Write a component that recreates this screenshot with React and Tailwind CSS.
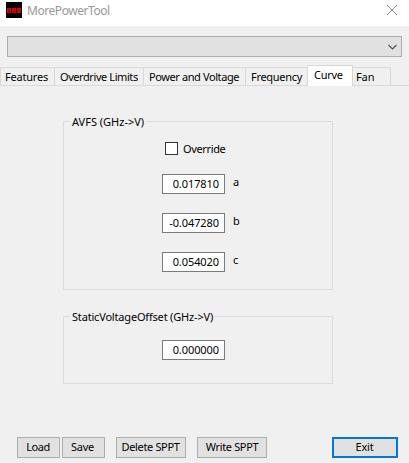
import React from "react";

function Tab({ label, className }) {
  return (
    <div className={`-mr-px -mb-px h-[19px] shrink-0 border border-[#d9d9d9] leading-[17px] whitespace-nowrap ${className}`}>
      {label}
    </div>
  );
}

function Field({ value, label }) {
  return (
    <div className="flex h-5">
      <div className="h-5 w-[63px] shrink-0 border border-[#7a7a7a] bg-white pr-[5px] text-right leading-[17px] tracking-[-0.08px]">
        {value}
      </div>
      {label && <span className="ml-2 h-4 leading-[15px]">{label}</span>}
    </div>
  );
}

function Group({ title, titleClass, className, children }) {
  return (
    <section className={`ml-[63px] w-[270px] border border-[#dcdcdc] ${className}`}>
      <h2 className={`-mt-[9px] ml-[6px] h-[17px] w-fit bg-[#f0f0f0] px-[2px] leading-[17px] whitespace-nowrap ${titleClass}`}>
        {title}
      </h2>
      {children}
    </section>
  );
}

function Button({ label, className }) {
  return (
    <button className={`flex h-[21px] shrink-0 items-center justify-center border bg-[#e1e1e1] whitespace-nowrap ${className}`}>
      {label}
    </button>
  );
}

export default function App() {
  return (
    <div className="flex h-[463px] w-[409px] flex-col overflow-hidden bg-[#f0f0f0] font-['Noto_Sans',sans-serif] text-[11px] text-black">
      <header className="flex h-[26px] shrink-0 bg-white">
        <svg className="mt-[2px] ml-[6px] h-4 w-4" viewBox="0 0 16 16" shapeRendering="crispEdges">
          <rect width="16" height="16" fill="#000" />
          <rect x="1" y="6" width="14" height="5" fill="#e00000" />
          <path d="M5 6h1v5H5zM10 6h1v5h-1z" fill="#300000" />
          <path d="M2 7h2v1H2zM2 9h2v1H2zM7 7h2v1H7zM7 9h2v1H7zM11 8h1v2h-1zM14 8h1v2h-1z" fill="#800000" />
        </svg>
        <span className="ml-[5px] text-[12px] leading-[22px] tracking-[-0.45px] text-[#999]">MorePowerTool</span>
        <svg className="mt-[5px] mr-[12px] ml-auto h-[10px] w-[10px]" viewBox="0 0 10 10" fill="none" stroke="#888" strokeWidth="1">
          <path d="M0 0L10 10M10 0L0 10" />
        </svg>
      </header>

      <div className="mt-[10px] ml-[7px] flex h-[21px] w-[395px] shrink-0 items-center justify-end border border-[#adadad] bg-[#e1e1e1] pr-1">
        <svg className="h-[6px] w-[9px]" viewBox="0 0 9 6" fill="none" stroke="#505050" strokeWidth="1.1">
          <path d="M0.5 1L4.5 5L8.5 1" />
        </svg>
      </div>

      <nav className="mt-2 flex h-[21px] shrink-0 items-end border-b border-[#d9d9d9]">
        <Tab label="Features" className="w-[55px] pl-[4px] tracking-[-0.2px]" />
        <Tab label="Overdrive Limits" className="w-[90px] pl-[5px] tracking-[-0.42px]" />
        <Tab label="Power and Voltage" className="w-[103px] pl-[5px] tracking-[-0.4px]" />
        <Tab label="Frequency" className="w-[63px] pl-[5px] tracking-[-0.3px]" />
        <div className="z-10 -mb-px h-[21px] w-[46px] border border-b-0 border-[#d9d9d9] bg-white pl-[6px] leading-[17px] tracking-[-0.3px]">Curve</div>
        <Tab label="Fan" className="w-[38px] border-l-0 pl-[3px] tracking-[-0.1px]" />
      </nav>

      <Group title="AVFS (GHz->V)" titleClass="" className="mt-[35px] h-[169px] shrink-0">
        <div className="mt-[12px] ml-[101px] flex h-[13px] items-center">
          <span className="h-[13px] w-[13px] border border-[#333] bg-white" />
          <span className="ml-[5px] leading-[15px] tracking-[-0.35px]">Override</span>
        </div>
        <div className="mt-[19px] ml-[98px] flex flex-col gap-[19px]">
          <Field value="0.017810" label="a" />
          <Field value="-0.047280" label="b" />
          <Field value="0.054020" label="c" />
        </div>
      </Group>

      <Group title="StaticVoltageOffset (GHz->V)" titleClass="tracking-[-0.18px]" className="mt-[26px] h-[68px] shrink-0">
        <div className="mt-[15px] ml-[98px]">
          <Field value="0.000000" />
        </div>
      </Group>

      <footer className="mt-[53px] ml-[17px] flex h-[21px] shrink-0">
        <Button label="Load" className="w-[43px] border-[#adadad] pr-px tracking-[-0.5px]" />
        <Button label="Save" className="ml-[2px] w-[43px] border-[#adadad] pr-[2px] tracking-[-0.3px]" />
        <Button label="Delete SPPT" className="ml-[11px] w-[70px] border-[#adadad] pr-px tracking-[-0.35px]" />
        <Button label="Write SPPT" className="ml-[11px] w-[70px] border-[#adadad] tracking-[-0.35px]" />
        <Button label="Exit" className="ml-[65px] w-[66px] border-2 border-[#0078d7] pr-px tracking-[-0.2px]" />
      </footer>
    </div>
  );
}
